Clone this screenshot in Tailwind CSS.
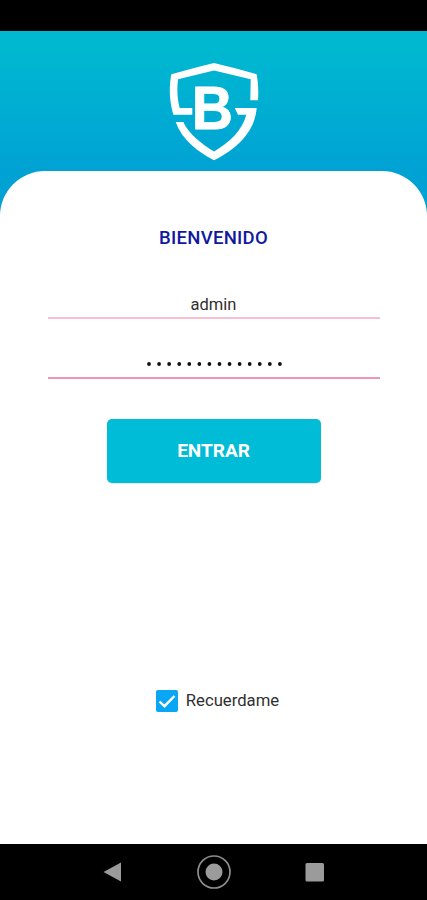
<!doctype html>
<html lang="es">
<head>
  <meta charset="UTF-8">
  <meta name="viewport" content="width=device-width, initial-scale=1.0">
  <title>Bienvenido</title>
  <script src="https://cdn.jsdelivr.net/npm/@tailwindcss/browser@4"></script>
</head>
<body class="flex h-[900px] w-[427px] flex-col overflow-hidden bg-black font-[Roboto,sans-serif]">
  <!-- status bar -->
  <div class="h-[31px] shrink-0 bg-black"></div>

  <main class="flex h-[813px] shrink-0 flex-col bg-linear-to-b from-[#00b8d0] from-[20px] to-[#00a2d4] to-[140px]">
    <header class="flex h-[140px] shrink-0 justify-center pt-[30px]">
      <svg class="h-[102px] w-[92px]" viewBox="168 61 92 102" fill="#fff">
        <path d="M214 63C201 66 186 70 171.3 74.3C169 88 169 99 173.3 114.7H192.3V108H179.7C177 98 177 89 178 79.3L214 70.5L250.7 79.3L250.300 100.3H258Q259 86 256.7 74.3C242 70 227 66 214 63Z"/>
        <path d="M175.7 122H183.3C189 134 201 143.500 214 151.500C229 142.500 242 131 246.300 114.700H238L234.700 108H256.700C254.500 133 236 149 214 160.300C198 152 182 140 175.700 122Z"/>
        <text transform="translate(191.700 128.700) scale(.93 1)" font-family="Liberation Sans, sans-serif" font-weight="700" font-size="61.500" stroke="#fff" stroke-width=".8">B</text>
      </svg>
    </header>

    <section class="flex grow flex-col items-center rounded-t-[45px] bg-white">
      <h1 class="mt-[54px] text-[18.500px] leading-[26px] font-medium tracking-[0.3px] text-[#1018a0]">BIENVENIDO</h1>

      <form class="flex grow flex-col items-center">
        <input type="text" value="admin" class="mt-[40px] h-[28px] w-[332px] border-b-2 border-[#f8bfd0] text-center text-[16.500px] text-[#303030] outline-none">
        <div class="mt-[31px] flex h-[29px] w-[332px] justify-center border-b-2 border-[#f096b4] pt-[11px]">
          <svg class="h-[6px] w-[138px]" viewBox="0 0 138 6">
            <path d="M4 3H135" fill="none" stroke="#111" stroke-width="3.800" stroke-linecap="round" stroke-dasharray="0 10.070"/>
          </svg>
        </div>
        <button type="button" class="mt-[40px] h-[64px] w-[214px] rounded-[5px] bg-[#00bcd6] text-[19px] font-bold text-white shadow-[0_1px_1px_#0000001a]">ENTRAR</button>
        <label class="mt-[205px] flex items-center gap-[8px] pl-[8px] text-[16.700px] leading-[26px] text-[#303030]">
          <svg class="size-[22px]" viewBox="0 0 22 22">
            <rect width="22" height="22" rx="2" fill="#08a6f5"/>
            <path d="M3.500 11.500L8.500 16.200L18.500 6" fill="none" stroke="#fff" stroke-width="2.400"/>
          </svg>
          Recuerdame
        </label>
      </form>
    </section>
  </main>

  <!-- navigation bar -->
  <nav class="flex h-[56px] shrink-0 items-center justify-center gap-[72px] bg-black">
    <svg class="h-[34px] w-[25px]" viewBox="0 0 25 34" fill="#9b9b9b">
      <path d="M4.500 17L22 7.500V26.500Z"/>
    </svg>
    <svg class="size-[36px]" viewBox="0 0 36 36">
      <circle cx="18" cy="18" r="16" fill="none" stroke="#8e8e8e" stroke-width="1.700"/>
      <circle cx="18" cy="18" r="8.500" fill="#9b9b9b"/>
    </svg>
    <svg class="h-[34px] w-[25px]" viewBox="0 0 25 34">
      <rect x="1.500" y="8" width="18.500" height="18.500" rx="1.500" fill="#9b9b9b"/>
    </svg>
  </nav>
</body>
</html>
